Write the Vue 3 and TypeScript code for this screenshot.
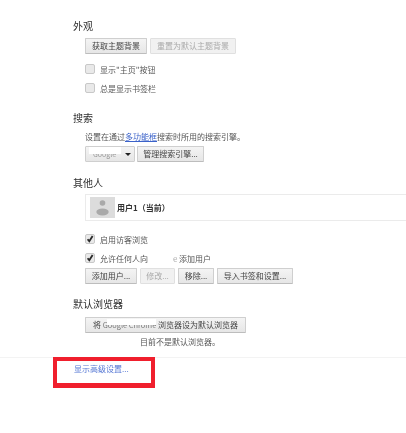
<script setup lang="ts">
interface Btn { label: string; disabled?: boolean }
const themeButtons: Btn[] = [
  { label: '获取主题背景' },
  { label: '重置为默认主题背景', disabled: true },
]
const userButtons: Btn[] = [
  { label: '添加用户...' },
  { label: '修改...', disabled: true },
  { label: '移除...' },
  { label: '导入书签和设置...' },
]
</script>

<template>
  <div class="page">
    <main class="settings">
      <section class="sec sec-look">
        <h3>外观</h3>
        <div class="body">
          <div class="btns">
            <button v-for="b in themeButtons" :key="b.label" :class="['btn', { off: b.disabled }]">{{ b.label }}</button>
          </div>
          <label class="check first"><span class="box"></span>显示"主页"按钮</label>
          <label class="check second"><span class="box"></span>总是显示书签栏</label>
        </div>
      </section>

      <section class="sec sec-search">
        <h3>搜索</h3>
        <div class="body">
          <p class="desc">设置在通过<a class="inline-link">多功能框</a>搜索时所用的搜索引擎。</p>
          <div class="btns engine">
            <div class="select">
              <span class="engine-name">Google<i class="mask"></i></span>
              <span class="arrow"></span>
            </div>
            <button class="btn manage">管理搜索引擎...</button>
          </div>
        </div>
      </section>

      <section class="sec sec-people">
        <h3>其他人</h3>
        <div class="body">
          <div class="user-box">
            <div class="avatar">
              <svg viewBox="0 0 25 21" width="25" height="21">
                <circle cx="12.5" cy="6" r="2.8" fill="#a9a9a9" />
                <ellipse cx="12.5" cy="15" rx="6.2" ry="3.4" fill="#a9a9a9" />
              </svg>
            </div>
            <b class="user-name">用户1（当前）</b>
          </div>
          <label class="check guest"><span class="box"><svg viewBox="0 0 10 10" width="10" height="10"><path d="M2.6 5.2 4.3 7.3 7.6 2" fill="none" stroke="#2a2a2a" stroke-width="1.8" /></svg></span>启用访客浏览</label>
          <label class="check anyone"><span class="box"><svg viewBox="0 0 10 10" width="10" height="10"><path d="M2.6 5.2 4.3 7.3 7.6 2" fill="none" stroke="#2a2a2a" stroke-width="1.8" /></svg></span>允许任何人向<span class="gap">e</span>添加用户</label>
          <div class="user-btns">
            <button v-for="b in userButtons" :key="b.label" :class="['btn', { off: b.disabled }]">{{ b.label }}</button>
          </div>
        </div>
      </section>

      <section class="sec sec-default">
        <h3>默认浏览器</h3>
        <div class="body">
          <button class="btn wide">将 <span class="chrome">Google Chrome<i class="mask thin"></i></span> 浏览器设为默认浏览器</button>
          <p class="status">目前不是默认浏览器。</p>
        </div>
      </section>
    </main>

    <footer class="advanced">
      <div class="highlight"><a class="adv-link">显示高级设置...</a></div>
    </footer>
  </div>
</template>

<style scoped>
.page {
  width: 406px;
  height: 433px;
  overflow: hidden;
  background: #fff;
  font-family: "Noto Sans CJK SC", "Liberation Sans", sans-serif;
  font-size: 8px;
  color: #444;
  filter: blur(0.4px);
}
.settings {
  padding: 19px 0 0 73px;
}
h3 {
  margin: 0;
  font-size: 10px;
  font-weight: 400;
  line-height: 13px;
  color: #303030;
}
.body {
  padding-left: 12px;
}
.sec-search { margin-top: 18px; }
.sec-people { margin-top: 14px; }
.sec-default { margin-top: 13px; }
.btns {
  display: flex;
  gap: 3px;
}
.sec-look .btns { margin-top: 6px; }
.btn {
  height: 16px;
  padding: 0 6px;
  font: inherit;
  line-height: 14px;
  color: #444;
  white-space: nowrap;
  background: linear-gradient(#f4f4f4, #e6e6e6);
  border: 1px solid #cfcfcf;
  border-bottom-color: #bdbdbd;
  border-radius: 1px;
}
.btn.off {
  color: #aaa;
  background: #f1f1f1;
  border-color: #e0e0e0;
}
.check {
  display: flex;
  align-items: center;
  height: 10px;
  color: #555;
}
.box {
  flex: none;
  box-sizing: border-box;
  width: 10px;
  height: 10px;
  margin-right: 5px;
  background: #e9e9e9;
  border: 1px solid #c8c8c8;
  border-radius: 2px;
  display: flex;
  align-items: center;
  justify-content: center;
}
.box svg { flex: none; }
.check.first { margin-top: 10px; }
.check.second { margin-top: 9px; }
.desc {
  margin: 7px 0 0;
  line-height: 11px;
  color: #555;
}
.inline-link {
  color: #3b62c9;
  text-decoration: underline;
}
.engine { margin-top: 4px; gap: 2px; }
.select {
  width: 50px;
  height: 16px;
  box-sizing: border-box;
  display: flex;
  align-items: center;
  justify-content: space-between;
  padding: 0 3px 0 7px;
  background: linear-gradient(#f4f4f4, #e6e6e6);
  border: 1px solid #cfcfcf;
  border-radius: 1px;
}
.engine-name {
  position: relative;
  color: #999;
  font-size: 7px;
  line-height: 14px;
}
.mask {
  position: absolute;
  left: -4px;
  right: -5px;
  top: 0;
  height: 7px;
  background: #fff;
}
.arrow {
  width: 0;
  height: 0;
  border-left: 3px solid transparent;
  border-right: 3px solid transparent;
  border-top: 3px solid #222;
}
.btn.manage { width: 67px; padding: 0; }
.user-box {
  display: flex;
  align-items: center;
  gap: 2px;
  height: 27px;
  margin-top: 5px;
  padding-left: 4px;
  border: 1px solid #ebebeb;
  border-right: 0;
  box-sizing: border-box;
}
.avatar {
  width: 25px;
  height: 21px;
  background: #dcdcdc;
  display: flex;
}
.user-name {
  color: #333;
  font-size: 8px;
  font-weight: 700;
}
.check.guest { margin-top: 13px; }
.check.anyone { margin-top: 9px; }
.gap {
  margin-left: 25px;
  color: #aaa;
  width: 6px;
}
.user-btns {
  display: grid;
  grid-template-columns: 52px 35px 36px 76px;
  column-gap: 3px;
  margin-top: 5px;
}
.user-btns .btn { padding: 0; }
.sec-default .body { padding-top: 7px; }
.btn.wide {
  display: block;
  width: 161px;
  padding: 0;
  text-align: center;
}
.chrome {
  position: relative;
  color: #777;
  font-size: 7.4px;
}
.mask.thin { top: 0; height: 6px; left: 4px; right: 0; }
.status {
  margin: 3px 0 0;
  padding-left: 55px;
  line-height: 11px;
  color: #555;
}
.advanced {
  margin-top: 10px;
  border-top: 1px solid #f3f3f3;
}
.highlight {
  box-sizing: border-box;
  width: 102px;
  height: 31px;
  margin: -1px 0 0 53px;
  padding: 2px 0 0 17px;
  border: 4px solid #f01f2d;
  border-bottom-width: 5px;
}
.adv-link {
  color: #5577d4;
  line-height: 11px;
  display: block;
}
</style>
